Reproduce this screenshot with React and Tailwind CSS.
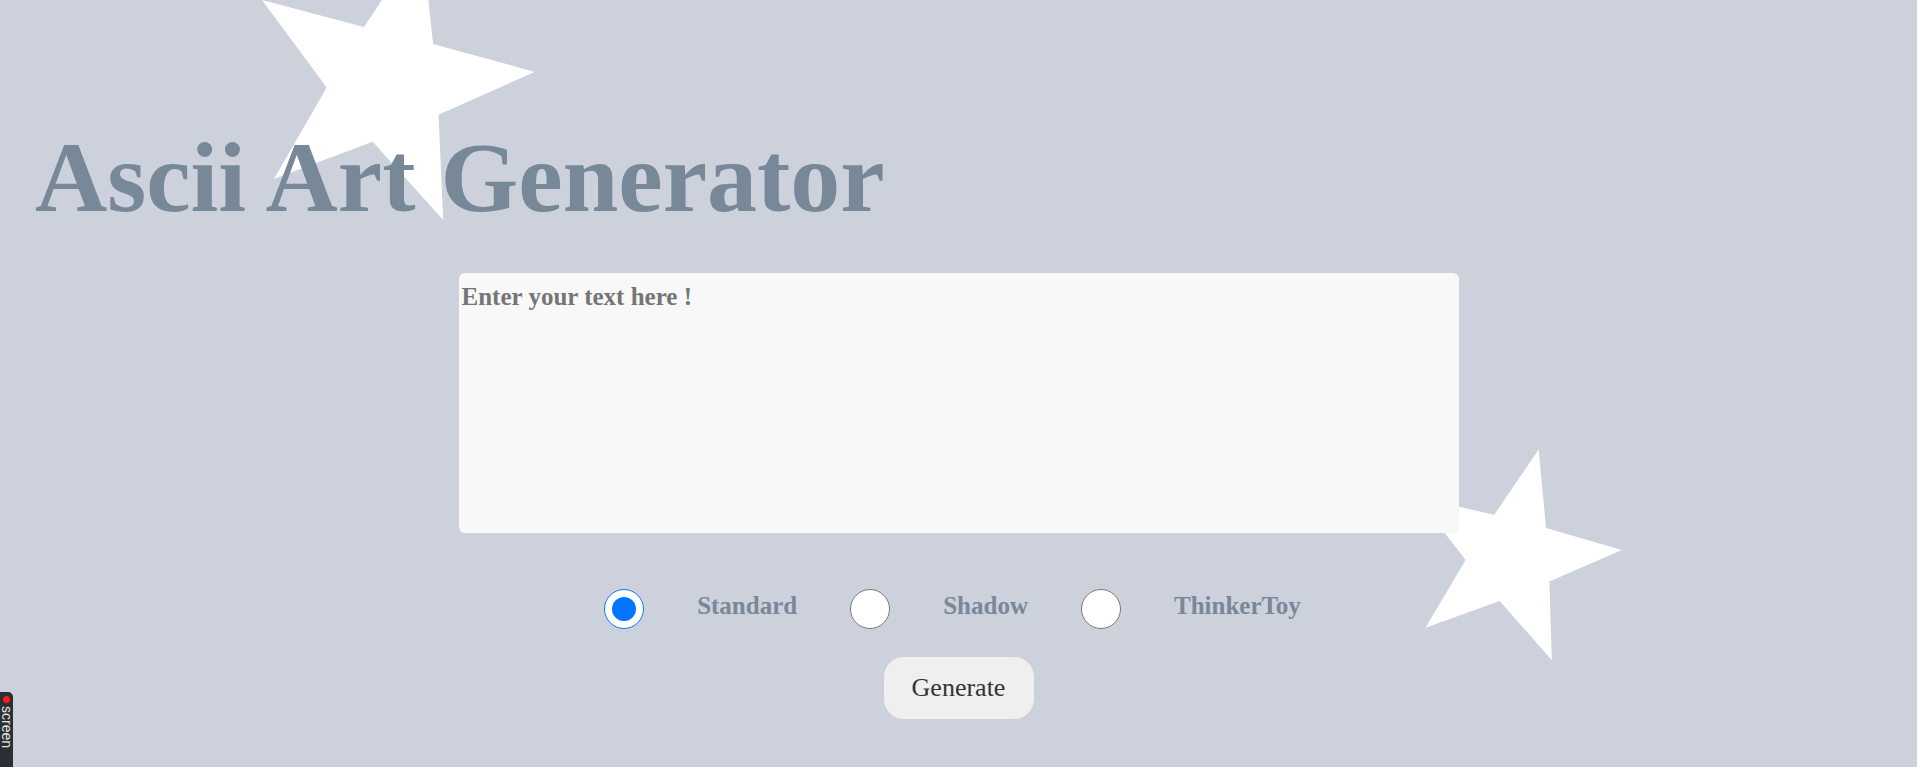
import { useState } from "react";

const serif = { fontFamily: '"Liberation Serif", "Times New Roman", serif' };

const styles = ["Standard", "Shadow", "ThinkerToy"];

const Stars = () => (
  <svg
    className="absolute inset-0 w-full h-full pointer-events-none"
    viewBox="0 0 1917 767"
    preserveAspectRatio="xMinYMin slice"
  >
    <polygon
      fill="#ffffff"
      points="534.6,71.9 438.5,114.8 443.2,219.9 372.7,141.8 274.1,178.7 326.7,87.5 262,0 364,27 422,-60.8 433.1,43.9"
    />
    <polygon
      fill="#ffffff"
      points="1621.8,550 1549.4,581.4 1551.9,660.2 1499.7,601.1 1425.5,627.8 1465.6,559.9 1417.3,497.5 1494.3,514.7 1538.6,449.5 1546.1,528"
    />
  </svg>
);

const App = () => {
  const [text, setText] = useState("");
  const [font, setFont] = useState("Standard");

  return (
    <div className="relative min-h-screen w-full overflow-hidden bg-[#cdd1dc]" style={serif}>
      <Stars />

      <div className="relative flex flex-col">
        <h1 className="pl-[35px] pt-[128px] text-[100px] leading-none font-bold text-[#778899]">
          Ascii Art Generator
        </h1>

        <textarea
          value={text}
          onChange={(e) => setText(e.target.value)}
          placeholder="Enter your text here !"
          className="mx-auto mt-[45px] w-[1000px] h-[260px] resize-none rounded-[6px] bg-[#f8f8f8] px-[3px] pt-[5px] text-[25px] font-bold text-[#333] placeholder:text-[#757575] outline-none"
        />

        {/* Font selector */}
        <div className="mt-[54px] flex items-center justify-center gap-[53px] pr-[12px]">
          {styles.map((s) => (
            <label key={s} className="flex items-center gap-[53px] cursor-pointer">
              <input
                type="radio"
                name="font"
                checked={font === s}
                onChange={() => setFont(s)}
                className="m-0 w-[40px] h-[40px] cursor-pointer"
              />
              <span className="mb-[6px] text-[25px] font-bold text-[#7a8798]">{s}</span>
            </label>
          ))}
        </div>

        <div className="mt-[26px] flex justify-center">
          <button className="w-[150px] h-[62px] rounded-[20px] bg-[#efefef] text-[26px] text-[#333]">
            Generate
          </button>
        </div>
      </div>

      {/* recorder tab */}
      <div className="absolute left-0 bottom-0 w-[13px] h-[75px] rounded-tr-[5px] bg-[#2b2e33] flex flex-col items-center pt-[4px] overflow-hidden">
        <span className="w-[7px] h-[7px] shrink-0 rounded-full bg-[#ff1a1a]" />
        <span
          className="mt-[3px] text-[14px] leading-none text-[#e5e5e5] [writing-mode:vertical-rl]"
          style={{ fontFamily: '"Liberation Sans", Arial, sans-serif' }}
        >
          screen
        </span>
      </div>
    </div>
  );
};

export default App;
